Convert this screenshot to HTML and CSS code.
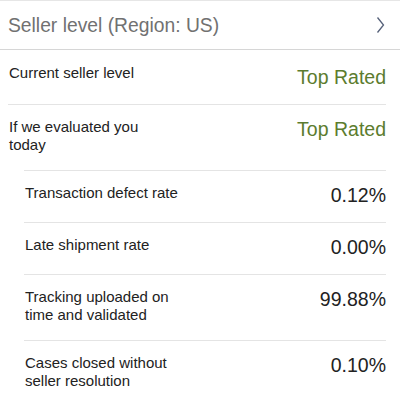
FILE: index.html
```html
<!DOCTYPE html>
<html lang="en">
<head>
    <meta charset="UTF-8">
    <meta name="viewport" content="width=device-width, initial-scale=1.0">
    <title>Seller level</title>
    <link rel="stylesheet" href="styles.css">
</head>
<body>
    <header class="level-header">
        <span class="level-title">Seller level (Region: US)</span>
        <svg class="chevron" width="9" height="18" viewBox="0 0 9 18">
            <path d="M1.5 1.5 L7.5 9 L1.5 16.5" fill="none" stroke="#56617a" stroke-width="1.3"/>
        </svg>
    </header>

    <section class="level-list">
        <div class="row">
            <div class="label">Current seller level</div>
            <div class="value rated">Top Rated</div>
        </div>
        <div class="row">
            <div class="label">If we evaluated you today</div>
            <div class="value rated">Top Rated</div>
        </div>
        <div class="row sub">
            <div class="label">Transaction defect rate</div>
            <div class="value">0.12%</div>
        </div>
        <div class="row sub">
            <div class="label">Late shipment rate</div>
            <div class="value">0.00%</div>
        </div>
        <div class="row sub">
            <div class="label">Tracking uploaded on time and validated</div>
            <div class="value">99.88%</div>
        </div>
        <div class="row sub">
            <div class="label">Cases closed without seller resolution</div>
            <div class="value">0.10%</div>
        </div>
    </section>
</body>
</html>
```

FILE: styles.css
```css
body {
    margin: 0;
    padding: 0;
    background: #fff;
    font-family: "Liberation Sans", Arial, sans-serif;
    color: #222;
}

/* header bar */
.level-header {
    height: 48px;
    border-top: 1px solid #e6e6e6;
    border-bottom: 1px solid #d6d6d6;
    display: flex;
    align-items: center;
    justify-content: space-between;
    padding: 0 15px 0 8px;
}

.level-title {
    font-size: 19.3px;
    color: #717171;
    padding-top: 1px;
}

.chevron {
    display: block;
}

/* rows */
.level-list {
    padding: 0 14px 0 8px;
}

.row {
    display: flex;
    justify-content: space-between;
    align-items: flex-start;
    padding: 13px 0 16px;
}

.row + .row {
    border-top: 1px solid #e4e4e4;
}

.row:first-child {
    padding-top: 14px;
    padding-bottom: 18px;
}

.row:first-child .value {
    margin-top: 2px;
    margin-bottom: -2px;
}

.row.sub {
    margin-left: 16px;
}

.label {
    font-size: 15px;
    line-height: 18px;
    max-width: 165px;
    padding-left: 1px;
}

.value {
    font-size: 19.5px;
    line-height: 22px;
    color: #222;
}

.value.rated {
    color: #5c7c2e;
}
```
